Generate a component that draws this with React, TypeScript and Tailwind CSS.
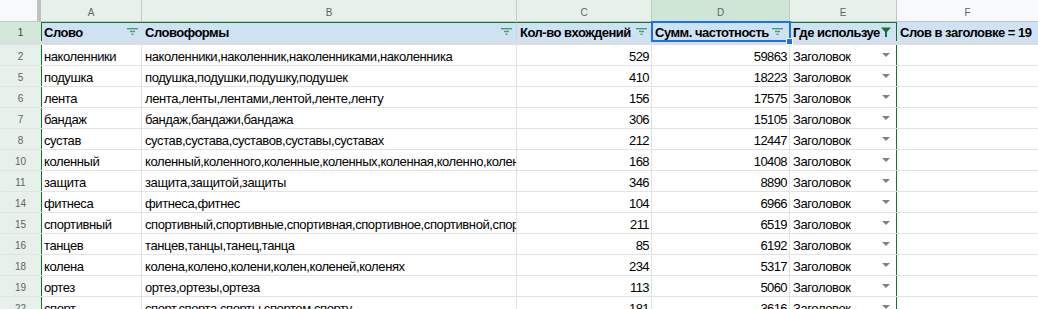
import React from 'react'

type Row = { n: number; word: string; forms: string; count: number; freq: number }

const rows: Row[] = [
  { n: 2, word: 'наколенники', forms: 'наколенники,наколенник,наколенниками,наколенника', count: 529, freq: 59863 },
  { n: 5, word: 'подушка', forms: 'подушка,подушки,подушку,подушек', count: 410, freq: 18223 },
  { n: 6, word: 'лента', forms: 'лента,ленты,лентами,лентой,ленте,ленту', count: 156, freq: 17575 },
  { n: 7, word: 'бандаж', forms: 'бандаж,бандажи,бандажа', count: 306, freq: 15105 },
  { n: 8, word: 'сустав', forms: 'сустав,сустава,суставов,суставы,суставах', count: 212, freq: 12447 },
  { n: 10, word: 'коленный', forms: 'коленный,коленного,коленные,коленных,коленная,коленно,коленной,коленным', count: 168, freq: 10408 },
  { n: 11, word: 'защита', forms: 'защита,защитой,защиты', count: 346, freq: 8890 },
  { n: 14, word: 'фитнеса', forms: 'фитнеса,фитнес', count: 104, freq: 6966 },
  { n: 15, word: 'спортивный', forms: 'спортивный,спортивные,спортивная,спортивное,спортивной,спортивного', count: 211, freq: 6519 },
  { n: 16, word: 'танцев', forms: 'танцев,танцы,танец,танца', count: 85, freq: 6192 },
  { n: 18, word: 'колена', forms: 'колена,колено,колени,колен,коленей,коленях', count: 234, freq: 5317 },
  { n: 19, word: 'ортез', forms: 'ортез,ортезы,ортеза', count: 113, freq: 5060 },
  { n: 22, word: 'спорт', forms: 'спорт,спорта,спорты,спортом,спорту', count: 181, freq: 3616 },
]

function FilterIcon() {
  return (
    <svg width="11" height="7" viewBox="0 0 11 7" className="shrink-0 self-center">
      <rect x="0" y="0" width="11" height="1.4" fill="#4f9a69" />
      <rect x="3" y="2.8" width="5" height="1.4" fill="#4f9a69" />
      <rect x="4.5" y="5.6" width="2" height="1.4" fill="#4f9a69" />
    </svg>
  )
}

function FunnelIcon() {
  return (
    <svg width="10" height="10" viewBox="0 0 10 10" className="shrink-0 self-center">
      <path d="M0 0.5 H10 L6 5 V10 H4 V5 Z" fill="#137333" />
    </svg>
  )
}

function Caret() {
  return (
    <svg width="8" height="4" viewBox="0 0 8 4" className="shrink-0 self-center">
      <path d="M0 0 H8 L4 4 Z" fill="#808080" />
    </svg>
  )
}

const font = { fontFamily: '"Liberation Sans", Arial, sans-serif' }

export default function App() {
  const colHead = 'h-full flex items-center justify-center pt-[3px] border-r border-[#c7c7c7] text-[10px] text-[#5f6368] shrink-0'
  const head1 = 'h-full flex items-end pb-[1px] leading-[14px] border-t border-[#137333] bg-[#cfe2f3] font-bold tracking-[-0.5px] overflow-hidden whitespace-nowrap shrink-0'
  const cell = 'h-full flex items-end pb-[1px] leading-[14px] border-r border-[#e2e3e3] overflow-hidden whitespace-nowrap shrink-0'

  return (
    <div className="relative w-[1038px] h-[309px] overflow-hidden bg-white text-[13px] tracking-[-0.4px] text-black" style={font}>
      {/* column letters */}
      <div className="flex h-[22px] border-b border-[#c7c7c7] tracking-normal">
        <div className="w-[41px] h-full bg-[#f8f9fa] border-r-4 border-[#c0c0c0] shrink-0" />
        <div className={`${colHead} w-[101px] bg-[#e6f2e9]`}>A</div>
        <div className={`${colHead} w-[375px] bg-[#e6f2e9]`}>B</div>
        <div className={`${colHead} w-[135px] bg-[#e6f2e9]`}>C</div>
        <div className={`${colHead} w-[138px] bg-[#cfe6d6] text-[#3c4043]`}>D</div>
        <div className={`${colHead} w-[107px] bg-[#e6f2e9]`}>E</div>
        <div className="h-full flex-1 flex items-center justify-center pt-[3px] bg-[#f8f9fa] text-[10px] text-[#5f6368]">F</div>
      </div>

      {/* header row 1 */}
      <div className="flex h-[19px]">
        <div className="w-[41px] h-full bg-[#d3e8d9] flex items-center justify-center pt-[1px] text-[10px] tracking-normal text-[#3c4043] shrink-0">1</div>
        <div className={`${head1} w-[101px] border-l border-r-[#c9d5e2] pl-[2px] pr-[4px] justify-between`}>
          <span>Слово</span>
          <FilterIcon />
        </div>
        <div className={`${head1} w-[375px] pl-[3px] pr-[4px] justify-between border-r border-r-[#c9d5e2]`}>
          <span>Словоформы</span>
          <FilterIcon />
        </div>
        <div className={`${head1} w-[135px] pl-[3px] pr-[4px] justify-between border-r border-r-[#c9d5e2]`}>
          <span>Кол-во вхождений</span>
          <FilterIcon />
        </div>
        <div className={`${head1} w-[138px] pl-[3px] pr-[6px] justify-between border-r border-r-[#c9d5e2]`}>
          <span>Сумм. частотность</span>
          <FilterIcon />
        </div>
        <div className={`${head1} w-[107px] pl-[3px] pr-[5px] border-r border-r-[#137333] gap-[1px]`}>
          <span className="overflow-hidden flex-1">Где используется</span>
          <FunnelIcon />
        </div>
        <div className="h-full flex-1 flex items-end pb-[1px] leading-[14px] bg-[#cfe2f3] font-bold tracking-[-0.5px] pl-[3px] whitespace-nowrap">
          Слов в заголовке = 19
        </div>
      </div>

      {/* frozen divider */}
      <div className="h-[4px] bg-[#d9dde4]" />

      {rows.map(r => (
        <div key={r.n} className="flex h-[21px] border-b border-[#e2e3e3]">
          <div className="w-[41px] h-full bg-[#e6f2e9] flex items-center justify-center pt-[2px] text-[10px] tracking-normal text-[#5f6368] shrink-0">
            {r.n}
          </div>
          <div className={`${cell} w-[101px] border-l border-l-[#137333] pl-[2px]`}>{r.word}</div>
          <div className={`${cell} w-[375px] pl-[3px]`}>{r.forms}</div>
          <div className={`${cell} w-[135px] justify-end pr-[2px] tracking-[-0.6px]`}>{r.count}</div>
          <div className={`${cell} w-[138px] justify-end pr-[2px] tracking-[-0.6px]`}>{r.freq}</div>
          <div className={`${cell} w-[107px] border-r-[#137333] pl-[3px] pr-[6px] justify-between`}>
            <span>Заголовок</span>
            <Caret />
          </div>
          <div className="h-full flex-1" />
        </div>
      ))}

      {/* active cell D1 */}
      <div className="absolute left-[651px] top-[21px] w-[140px] h-[21px] border-2 border-[#1a73e8] pointer-events-none" />
      <div className="absolute left-[786px] top-[38px] w-[7px] h-[7px] bg-[#1a73e8] border border-white" />
    </div>
  )
}
